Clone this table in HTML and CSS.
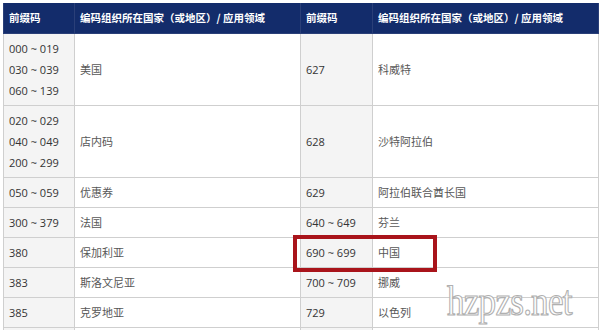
FILE: index.html
```html
<!DOCTYPE html>
<html lang="zh">
<head>
<meta charset="utf-8">
<link rel="stylesheet" href="styles.css">
</head>
<body>
<div class="wrap">
  <table class="codes">
    <colgroup>
      <col class="c1"><col class="c2"><col class="c3"><col class="c4">
    </colgroup>
    <thead>
      <tr class="head">
        <th>前缀码</th>
        <th>编码组织所在国家（或地区）/ 应用领域</th>
        <th>前缀码</th>
        <th>编码组织所在国家（或地区）/ 应用领域</th>
      </tr>
    </thead>
    <tbody>
      <tr class="tall">
        <td class="code">000 ~ 019<br>030 ~ 039<br>060 ~ 139</td>
        <td>美国</td>
        <td class="code">627</td>
        <td>科威特</td>
      </tr>
      <tr class="tall">
        <td class="code">020 ~ 029<br>040 ~ 049<br>200 ~ 299</td>
        <td>店内码</td>
        <td class="code">628</td>
        <td>沙特阿拉伯</td>
      </tr>
      <tr>
        <td class="code">050 ~ 059</td>
        <td>优惠券</td>
        <td class="code">629</td>
        <td>阿拉伯联合酋长国</td>
      </tr>
      <tr>
        <td class="code">300 ~ 379</td>
        <td>法国</td>
        <td class="code">640 ~ 649</td>
        <td>芬兰</td>
      </tr>
      <tr>
        <td class="code">380</td>
        <td>保加利亚</td>
        <td class="code">690 ~ 699</td>
        <td>中国</td>
      </tr>
      <tr>
        <td class="code">383</td>
        <td>斯洛文尼亚</td>
        <td class="code">700 ~ 709</td>
        <td>挪威</td>
      </tr>
      <tr>
        <td class="code">385</td>
        <td>克罗地亚</td>
        <td class="code">729</td>
        <td>以色列</td>
      </tr>
      <tr>
        <td class="code"></td>
        <td></td>
        <td class="code"></td>
        <td></td>
      </tr>
    </tbody>
  </table>
  <div class="highlight"></div>
  <div class="watermark">hzpzs.net</div>
</div>
</body>
</html>
```
FILE: styles.css
```css
html, body {
  margin: 0;
  padding: 0;
  background: #ffffff;
  overflow: hidden;
}
body {
  width: 600px;
  height: 330px;
}
.wrap {
  position: relative;
  padding: 3px 0 0 3px;
}
.codes {
  border-collapse: collapse;
  table-layout: fixed;
  width: 595px;
  font-family: "Open Sans", "Noto Sans CJK SC", sans-serif;
  font-size: 11px;
  color: #575757;
}
.c1 { width: 71px; }
.c2 { width: 226px; }
.c3 { width: 72px; }
.c4 { width: 226px; }
.codes th {
  background: #132c6b;
  color: #ffffff;
  font-weight: 700;
  font-size: 10.5px;
  text-align: left;
  height: 30px;
  padding: 0 5px;
  border: 1px solid #2a3f78;
  border-top: none;
  box-sizing: border-box;
  font-family: "Noto Sans CJK SC", sans-serif;
  white-space: nowrap;
}
.codes td {
  border: 1px solid #cfcfcf;
  padding: 4px 5px;
  line-height: 21px;
  height: 30px;
  box-sizing: border-box;
  vertical-align: middle;
  background: #ffffff;
}
.codes td.code {
  background: #f4f4f4;
  color: #333333;
}
.codes tr.tall td {
  height: 72px;
}
.highlight {
  position: absolute;
  left: 293px;
  top: 235px;
  width: 144px;
  height: 37px;
  box-sizing: border-box;
  border: 4px solid #a9141b;
}
.watermark {
  position: absolute;
  left: 447px;
  top: 278px;
  font-family: "Liberation Serif", serif;
  font-size: 42px;
  line-height: 46px;
  color: #ffffff;
  -webkit-text-stroke: 1.2px #b0b0b0;
  transform: scaleX(0.84);
  transform-origin: left top;
  letter-spacing: -1px;
}
```
